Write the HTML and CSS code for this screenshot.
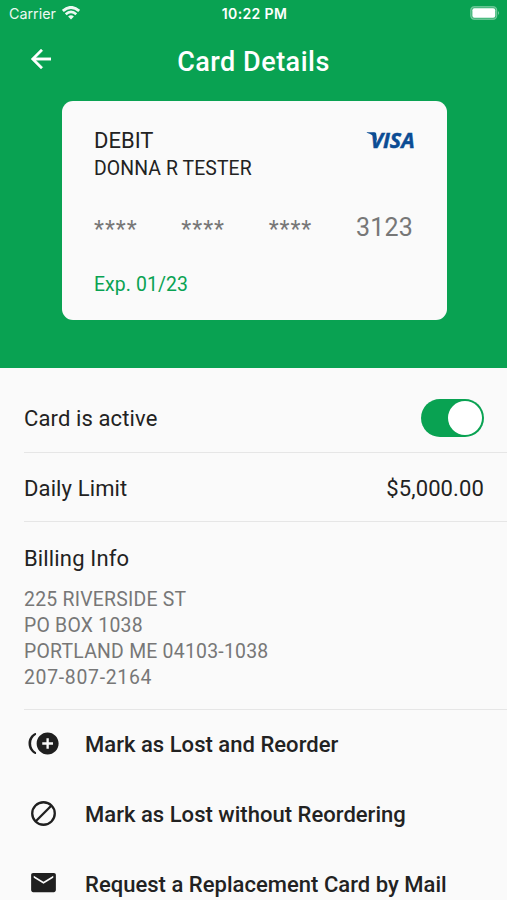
FILE: index.html
```html
<!DOCTYPE html>
<html lang="en">
<head>
<meta charset="utf-8">
<meta name="viewport" content="width=device-width, initial-scale=1">
<title>Card Details</title>
<link rel="stylesheet" href="styles.css">
</head>
<body>
<header class="hero">
  <div class="status">
    <div class="carrier"><span>Carrier</span>
      <svg class="wifi" viewBox="0 0 18 14" width="18" height="14" fill="none" stroke="#fff"><path d="M.8 5Q9-2.200 17.200 5" stroke-width="2.900"/><path d="M3.700 8.200Q9 3.500 14.300 8.200" stroke-width="2.600"/><path d="M6.100 10.500Q9 8 11.900 10.500L9 13.600Z" fill="#fff" stroke="none"/></svg>
    </div>
    <span class="time">10:22 PM</span>
    <svg class="battery" viewBox="0 0 30 14" width="30" height="14"><rect x=".7" y=".7" width="26" height="12.600" rx="3.600" fill="#fff" fill-opacity=".2" stroke="#fff" stroke-opacity=".35" stroke-width="1.200"/><rect x="2.400" y="2.300" width="22.800" height="9.400" rx="2" fill="#fff"/><path d="M28 5q1.800 1.800 0 4z" fill="#fff" fill-opacity=".5"/></svg>
  </div>
  <div class="titlebar">
    <svg class="back" viewBox="4 4 16 16" width="20" height="20"><path fill="#fff" stroke="#fff" stroke-width=".3" d="M20 11H7.830l5.590-5.590L12 4l-8 8 8 8 1.410-1.410L7.830 13H20v-2z"/></svg>
    <h1>Card Details</h1>
  </div>
  <section class="card">
    <div class="card-head">
      <span class="kind">DEBIT</span>
      <svg class="visa" viewBox="0 0 50 32" width="50" height="32" fill="#0b4c94" stroke="#0b4c94" stroke-width=".5"><text x="4.500" y="24" textLength="44" lengthAdjust="spacingAndGlyphs">VISA</text><path stroke="none" d="M.8 8.300H8.200q1.600.1 1.900 1.600L11 17Q8 10.700.8 8.800Z"/></svg>
    </div>
    <div class="holder">DONNA R TESTER</div>
    <div class="number"><span class="mask">****</span><span class="mask">****</span><span class="mask">****</span><span>3123</span></div>
    <div class="expiry">Exp. 01/23</div>
  </section>
</header>
<main>
  <div class="row active"><span>Card is active</span><span class="switch"></span></div>
  <div class="row limit"><span>Daily Limit</span><span class="amount">$5,000.00</span></div>
  <section class="billing">
    <h2>Billing Info</h2>
    <address>225 RIVERSIDE ST<br>PO BOX 1038<br>PORTLAND ME 04103-1038<br><span class="phone">207-807-2164</span></address>
  </section>
  <nav>
    <a class="action"><svg viewBox="0 0 24 24"><path d="M15 4C10.580 4 7 7.580 7 12s3.580 8 8 8 8-3.580 8-8-3.580-8-8-8zm3.900 8.850h-3.050v3.050h-1.700v-3.050H11.100v-1.700h3.050V8.100h1.700v3.050h3.050z"/><path d="M3 12c0-2.700 1.300-5 3.300-6.200.2-.1.300-.3.300-.5V4.800c0-.4-.4-.6-.7-.4C3 5.700 1.100 8.600 1.100 12s1.900 6.300 4.800 7.600c.3.200.7-.1.700-.4v-.5c0-.2-.1-.4-.3-.5C4.300 17 3 14.700 3 12z"/></svg><span>Mark as Lost and Reorder</span></a>
    <a class="action"><svg viewBox="0 0 24 24" fill="none" stroke="#1f1f1f" stroke-width="1.700"><circle cx="12" cy="12" r="8.200"/><path d="M6.200 17.800 17.800 6.200"/></svg><span>Mark as Lost without Reordering</span></a>
    <a class="action"><svg viewBox="0 0 24 24"><path d="M19.500 5h-15C3.500 5 3 5.700 3 6.500v11c0 .8.700 1.500 1.500 1.500h15c.8 0 1.500-.7 1.500-1.500v-11c0-.8-.5-1.500-1.500-1.500zm-.4 3.500L12 12.900 4.900 8.500V7l7.100 4.500L19.100 7z"/></svg><span>Request a Replacement Card by Mail</span></a>
  </nav>
</main>
</body>
</html>
```
FILE: styles.css
```css
* { box-sizing: border-box; }
body {
  margin: 0;
  height: 900px;
  overflow: hidden;
  background: #fafafa;
  color: #222;
  font-family: Roboto, "Liberation Sans", sans-serif;
  font-size: 22px;
  line-height: 26px;
}
h1, h2 { margin: 0; font-weight: 400; font-size: inherit; }
h2 { letter-spacing: .15px; }
.hero { height: 367.5px; background: #09a252; color: #fff; }
.status {
  display: grid;
  grid-template-columns: 1fr auto 1fr;
  align-items: center;
  height: 27px;
  padding: 0 7px 0 9px;
  font: 14.3px/27px Inter, "Liberation Sans", sans-serif;
}
.carrier { display: flex; align-items: center; gap: 6px; opacity: .93; }
.wifi { margin-top: -2px; }
.time { font-weight: 600; font-size: 14px; letter-spacing: .35px; }
.battery { justify-self: end; margin-top: -1px; }
.titlebar {
  display: grid;
  grid-template-columns: 60px 1fr 60px;
  align-items: center;
  height: 74px;
  padding-bottom: 5px;
}
.back { margin: -5px 0 0 30.5px; }
h1 { font-size: 27px; line-height: 32px; font-weight: 500; text-align: center; letter-spacing: .5px; }
.card {
  width: 385px;
  height: 219px;
  margin: 0 auto 0 62px;
  padding: 26px 32px 0;
  border-radius: 11px;
  background: #fafafa;
  color: #222;
}
.card-head { display: flex; justify-content: space-between; align-items: center; height: 26px; }
.kind { padding-top: 1px; }
.visa { margin-right: -1px; overflow: visible; }
.visa text { font: italic 700 21px "Open Sans", "Liberation Sans", sans-serif; }
.holder { padding-top: 1px; font-size: 19.4px; line-height: 29px; letter-spacing: .1px; }
.number {
  display: flex;
  justify-content: space-between;
  height: 32px;
  margin-top: 29px;
  padding-right: 2px;
  font-size: 25px;
  line-height: 32px;
  letter-spacing: .2px;
  color: #777;
}
.mask { padding-top: 2px; font-size: 23px; letter-spacing: 1px; }
.expiry { margin-top: 27px; padding-top: 1px; color: #09a252; font-size: 19.4px; line-height: 26px; letter-spacing: .1px; }
.row {
  display: flex;
  justify-content: space-between;
  align-items: center;
  height: 69.5px;
  margin-left: 24px;
  padding-right: 23px;
  border-bottom: 1px solid #e6e6e6;
  letter-spacing: .12px;
}
.active { height: 85.5px; padding-top: 17px; }
.active > :first-child { padding-top: 2px; }
.limit { height: 69px; padding-top: 3px; }
.switch {
  width: 63px;
  height: 38px;
  padding: 2px;
  border-radius: 19px;
  background: #09a252;
}
.switch::before {
  content: "";
  display: block;
  width: 34px;
  height: 34px;
  margin-left: auto;
  border-radius: 50%;
  background: #fff;
}
.billing {
  height: 187.5px;
  margin-left: 24px;
  padding-top: 24px;
  border-bottom: 1px solid #e6e6e6;
}
address { margin-top: 14.5px; font-style: normal; font-size: 19.4px; line-height: 26.2px; letter-spacing: .24px; color: #777; }
.phone { letter-spacing: .7px; }
.action {
  display: flex;
  align-items: center;
  gap: 25px;
  height: 69.7px;
  padding-left: 27px;
  font-weight: 500;
  letter-spacing: .03px;
}
.action span { padding-top: 2px; }
.action svg { width: 33px; height: 33px; margin-top: -2px; }
.action svg:not([fill]) { fill: #1f1f1f; }
```
